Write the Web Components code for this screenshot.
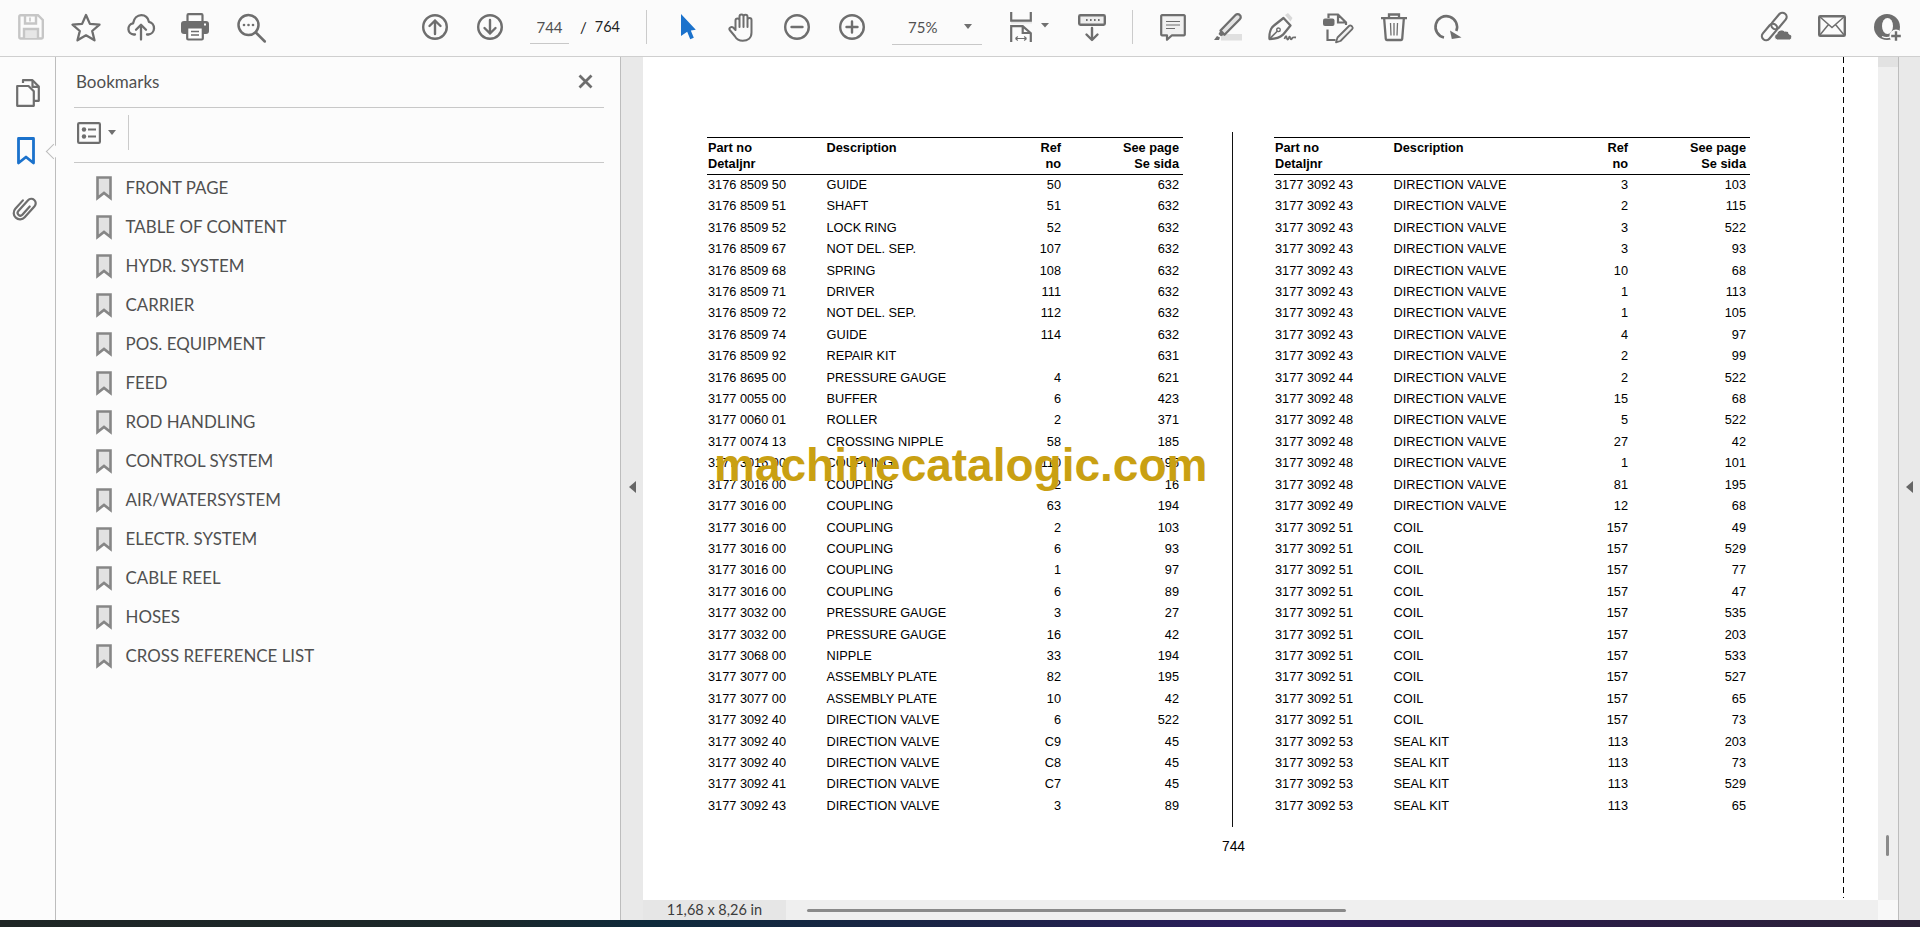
<!DOCTYPE html>
<html>
<head>
<meta charset="utf-8">
<title>Bookmarks</title>
<style>
  html, body { margin: 0; height: 927px; overflow: hidden; background: #fff; }
  body { display: flex; flex-direction: column; font-family: Lato, "Liberation Sans", sans-serif; }
</style>
</head>
<body>
<pdf-toolbar>
  <tool-icon name="save" gap="18"></tool-icon>
  <tool-icon name="star" gap="27"></tool-icon>
  <tool-icon name="upload" gap="26"></tool-icon>
  <tool-icon name="print" gap="26"></tool-icon>
  <tool-icon name="search" gap="28"></tool-icon>
  <tool-icon name="up" gap="156"></tool-icon>
  <tool-icon name="down" gap="29"></tool-icon>
  <page-counter gap="27" current="744" total="764"></page-counter>
  <tool-sep gap="26"></tool-sep>
  <tool-icon name="cursor" gap="33"></tool-icon>
  <tool-icon name="hand" gap="32"></tool-icon>
  <tool-icon name="minus" gap="28"></tool-icon>
  <tool-icon name="plus" gap="29"></tool-icon>
  <zoom-box gap="27" value="75%"></zoom-box>
  <tool-icon name="fit" gap="28"></tool-icon>
  <tool-icon name="caret" gap="9"></tool-icon>
  <tool-icon name="keys" gap="29"></tool-icon>
  <tool-sep gap="26"></tool-sep>
  <tool-icon name="comment" gap="27"></tool-icon>
  <tool-icon name="marker" gap="28"></tool-icon>
  <tool-icon name="pen" gap="26"></tool-icon>
  <tool-icon name="docedit" gap="26"></tool-icon>
  <tool-icon name="trash" gap="28"></tool-icon>
  <tool-icon name="rotate" gap="27"></tool-icon>
  <tool-icon name="link" gap="300"></tool-icon>
  <tool-icon name="mail" gap="26"></tool-icon>
  <tool-icon name="user" gap="28"></tool-icon>
</pdf-toolbar>
<pdf-main>
  <side-rail></side-rail>
  <bookmark-panel>
    <bookmark-item>FRONT PAGE</bookmark-item>
    <bookmark-item>TABLE OF CONTENT</bookmark-item>
    <bookmark-item>HYDR. SYSTEM</bookmark-item>
    <bookmark-item>CARRIER</bookmark-item>
    <bookmark-item>POS. EQUIPMENT</bookmark-item>
    <bookmark-item>FEED</bookmark-item>
    <bookmark-item>ROD HANDLING</bookmark-item>
    <bookmark-item>CONTROL SYSTEM</bookmark-item>
    <bookmark-item>AIR/WATERSYSTEM</bookmark-item>
    <bookmark-item>ELECTR. SYSTEM</bookmark-item>
    <bookmark-item>CABLE REEL</bookmark-item>
    <bookmark-item>HOSES</bookmark-item>
    <bookmark-item>CROSS REFERENCE LIST</bookmark-item>
  </bookmark-panel>
  <side-splitter dir="left"></side-splitter>
  <doc-viewer>
    <parts-table data-set="left"></parts-table>
    <parts-table data-set="right"></parts-table>
  </doc-viewer>
  <side-splitter dir="right"></side-splitter>
</pdf-main>
<task-strip></task-strip>

<script>
const G = '#6e6e6e';
// icons are drawn in real pixels; every box is 30 high and starts at y=12 of the toolbar
const ICONS = {
  save: { w: 26, top: 14, body: `<g fill="none" stroke="#c6c6c6" stroke-width="2.4"><path d="M2.5 1.2H20l4.8 4.8v17.3a1.2 1.2 0 0 1-1.2 1.2H2.5a1.2 1.2 0 0 1-1.2-1.2V2.4a1.2 1.2 0 0 1 1.2-1.2z"/><path d="M7 1.5v8h11v-8"/><path d="M12 3.5v4" stroke-width="1.6"/><path d="M6 24v-9h14v9" fill="#e6e6e6"/></g>` },
  star: { w: 30, top: 13, body: `<path d="M15 2l3.9 8.9 9.6.8-7.3 6.3 2.3 9.3-8.5-5-8.5 5 2.3-9.3-7.3-6.3 9.6-.8z" fill="none" stroke="${G}" stroke-width="2.3" stroke-linejoin="round"/>` },
  upload: { w: 28, top: 14, body: `<g fill="none" stroke="${G}" stroke-width="2.3" stroke-linecap="round" stroke-linejoin="round"><path d="M8 20.5H6.8a5.6 5.6 0 0 1-.8-11.1C7 4.4 10.3 1.2 14.3 1.2c3.8 0 6.8 2.8 7.7 6.7a6.4 6.4 0 0 1-.6 12.6H20"/><path d="M14 25.5V11M9 15.8l5-5 5 5"/></g>` },
  print: { w: 28, top: 13, body: `<g><path d="M6.5 8V2.2a1 1 0 0 1 1-1h13a1 1 0 0 1 1 1V8" fill="none" stroke="${G}" stroke-width="2.2"/><rect x="0" y="8" width="28" height="13" rx="3" fill="${G}"/><rect x="23" y="10.5" width="2" height="2" fill="#fff"/><rect x="6.2" y="14.5" width="15.6" height="12" rx="1" fill="#fff" stroke="${G}" stroke-width="2.2"/><path d="M10 18.5h8M10 22h8" stroke="${G}" stroke-width="1.4"/></g>` },
  search: { w: 29, top: 14, body: `<g fill="none" stroke="${G}" stroke-width="2.5" stroke-linecap="round"><circle cx="11.5" cy="11" r="10"/><path d="M18.8 18.5l9 9"/></g><g fill="${G}"><circle cx="7" cy="11" r="1.3"/><circle cx="11.5" cy="11" r="1.3"/><circle cx="16" cy="11" r="1.3"/></g>` },
  up: { w: 26, top: 14, body: `<g fill="none" stroke="${G}" stroke-width="2.4" stroke-linecap="round" stroke-linejoin="round"><circle cx="13" cy="13" r="11.8"/><path d="M13 20V6.5M7.5 12L13 6.5 18.5 12"/></g>` },
  down: { w: 26, top: 14, body: `<g fill="none" stroke="${G}" stroke-width="2.4" stroke-linecap="round" stroke-linejoin="round"><circle cx="13" cy="13" r="11.8"/><path d="M13 6v13.5M7.5 14L13 19.5 18.5 14"/></g>` },
  cursor: { w: 16, top: 14, body: `<path d="M1 0l14.8 15.8-5 .7 3 7.2-3.6 1.5-3-7.4L1 22z" fill="#1b72cc"/>` },
  hand: { w: 28, top: 13, body: `<path d="M7.5 17V7.5a2 2 0 0 1 4 0V14V3.5a2 2 0 0 1 4 0V14V3.7a2 2 0 0 1 4 0V14V7a2 2 0 0 1 4 0v12.5c0 5.5-3.8 8.3-8.8 8.3-4.4 0-6.4-2-8-4.8L1.7 17c-1.2-2 1.6-4 3.5-2.4z" fill="none" stroke="${G}" stroke-width="2" stroke-linejoin="round" stroke-linecap="round"/>` },
  minus: { w: 26, top: 14, body: `<g fill="none" stroke="${G}" stroke-width="2.4" stroke-linecap="round"><circle cx="13" cy="13" r="11.8"/><path d="M7.5 13h11"/></g>` },
  plus: { w: 26, top: 14, body: `<g fill="none" stroke="${G}" stroke-width="2.4" stroke-linecap="round"><circle cx="13" cy="13" r="11.8"/><path d="M7.5 13h11M13 7.5v11"/></g>` },
  fit: { w: 22, top: 12, body: `<rect x="1" y="9" width="21" height="2.5" fill="#e6e6e6"/><g fill="none" stroke="${G}" stroke-width="2.2"><path d="M1.2 0v8.600h19.600V0"/><path d="M1.2 30V14.200h11.500l8.100 7V30M12.700 14.500v6.500h7.800"/></g><path d="M5.500 26.500h11M5.500 26.500l2.300-2M5.500 26.500l2.300 2M16.500 26.500l-2.300-2M16.500 26.500l-2.300 2" fill="none" stroke="${G}" stroke-width="1.2"/>` },
  caret: { w: 8, top: 23, body: `<path d="M0 0h8L4 4.500z" fill="#707070"/>` },
  keys: { w: 28, top: 14, body: `<rect x="1.2" y="1.2" width="25.6" height="9.6" rx="1.2" fill="#eee" stroke="${G}" stroke-width="2.4"/><g fill="${G}"><rect x="8" y="5" width="1.6" height="2"/><rect x="12" y="5" width="1.6" height="2"/><rect x="16" y="5" width="1.6" height="2"/><rect x="20" y="5" width="1.6" height="2"/></g><path d="M14 14v11.5M8.500 20.500l5.500 5.500 5.500-5.500" fill="none" stroke="${G}" stroke-width="2.4" stroke-linecap="round" stroke-linejoin="round"/>` },
  comment: { w: 26, top: 14, body: `<path d="M2 1.2h22a.8.8 0 0 1 .8.8v18.5a.8.8 0 0 1-.8.8H12L7 25.800v-4.500H2a.8.8 0 0 1-.8-.8V2a.8.8 0 0 1 .8-.8z" fill="#f1f1f1" stroke="${G}" stroke-width="2.2" stroke-linejoin="round"/><path d="M6 7.500h14M6 11h14M6 14.500h9" stroke="${G}" stroke-width="1.2"/>` },
  marker: { w: 28, top: 13, body: `<rect x="7" y="21" width="21" height="6.5" fill="#e0e0e0"/><path d="M0 27l3-4 3 1.500-1 2.500z" fill="${G}"/><path d="M6.500 17.500L21.500 2a3 3 0 0 1 4.300 0 3 3 0 0 1 0 4.300L10.500 21.800z" fill="#e4e4e4" stroke="${G}" stroke-width="2.3" stroke-linejoin="round"/><path d="M6.500 17.500l-2 3.500 2.300 2.300 3.700-1.500z" fill="${G}"/>` },
  pen: { w: 29, top: 13, body: `<path d="M17 2l3-2 4.500 5-2 3.500z" fill="#d9d9d9"/><path d="M1.500 26C1 20 3 14.500 6 12.500L15.500 5l7 7.500-7.500 9.200c-3 2.800-8 4.300-13.500 4.300z" fill="none" stroke="${G}" stroke-width="2.3" stroke-linejoin="round"/><path d="M2 25.500L9.500 18" stroke="${G}" stroke-width="1.6"/><circle cx="10.500" cy="16.800" r="1.800" fill="none" stroke="${G}" stroke-width="1.4"/><path d="M16.500 26c1-3.500 1.800-3.500 2.300-1 .6 2.200 1.300 2 2-.2.500-1.800 1.200-1.500 1.500.2.400 1.800 1.200 1.500 2 0 .4-1 1.200-.8 3.700-.5" fill="none" stroke="${G}" stroke-width="1.8"/>` },
  docedit: { w: 30, top: 13, body: `<path d="M5.500 5V1.500h9.500L23 9.500v2.500M15 2v7.500h8" fill="none" stroke="${G}" stroke-width="2.2"/><rect x="0" y="5.5" width="11.5" height="7.5" rx="2" fill="${G}"/><path d="M4.500 16.500v10.500h8" fill="none" stroke="${G}" stroke-width="2.2"/><path d="M14.500 24.500L26 13a1.800 1.800 0 0 1 2.500 0l.7.700a1.800 1.800 0 0 1 0 2.500L17.500 28l-4.500 1.300z" fill="#f1f1f1" stroke="${G}" stroke-width="1.8" stroke-linejoin="round"/>` },
  trash: { w: 26, top: 13, body: `<g fill="none" stroke="${G}"><path d="M0 5.200h26M8 5V1.500h10V5" stroke-width="2.3"/><path d="M3.200 6l1.600 20a1 1 0 0 0 1 1h14.400a1 1 0 0 0 1-1l1.600-20" stroke-width="2.3"/><path d="M9.500 10l.5 12.500M13 10v12.500M16.500 10L16 22.500" stroke-width="1.3"/></g>` },
  rotate: { w: 28, top: 15, body: `<path d="M10 22.500A10.800 10.800 0 1 1 22.300 16" fill="none" stroke="${G}" stroke-width="2.6"/><path d="M16 15.500L27.500 22.500 17.800 24z" fill="${G}"/>` },
  link: { w: 30, top: 13, body: `<g fill="none" stroke="${G}" stroke-width="2.2"><rect x="-9.500" y="-4.200" width="19" height="8.400" rx="4.200" transform="translate(7.500 19) rotate(-50)"/><rect x="-9.500" y="-4.200" width="19" height="8.400" rx="4.200" transform="translate(17 8) rotate(-50)"/></g><path d="M15.500 27a3.200 3.200 0 0 1-.5-6.300c.5-3.500 5-5 7.500-2.500 2-.7 4.300.5 4.500 2.700a3.100 3.100 0 0 1 .5 6.100z" fill="${G}" stroke="#fbfbfb" stroke-width="1"/>` },
  mail: { w: 28, top: 15, body: `<g fill="none" stroke="${G}"><rect x="1.2" y="1.2" width="25.6" height="19.6" rx="1" stroke-width="2.4"/><path d="M1.500 1.500L14 12.500 26.500 1.500M1.500 20.500L10.500 9.500M26.500 20.500L17.500 9.500" stroke-width="1.5"/></g>` },
  user: { w: 27, top: 14, body: `<circle cx="13" cy="13" r="13" fill="${G}"/><ellipse cx="13.500" cy="12" rx="5.500" ry="8" fill="#fbfbfb"/><path d="M8 22.500c3 1.500 6 1.500 9 0" fill="none" stroke="#fbfbfb" stroke-width="1.2"/><circle cx="22" cy="22" r="6.500" fill="#fbfbfb"/><path d="M22 17.200v9.600M17.200 22h9.600" stroke="${G}" stroke-width="2.4"/>` },
  pages: { w: 24, top: 0, h: 28, body: `<g fill="none" stroke="${G}" stroke-width="2.2" stroke-linejoin="round"><path d="M7 4V1.200h9.500l6.300 6.300v14.300H18"/><path d="M16.500 1.500v6.300h6"/><path d="M1.200 7H7v0H12.500l5.300 5.300V26.800H1.200z"/></g>` },
  bookmark: { w: 18, top: 0, h: 28, body: `<path d="M1.500 1.500h15v24.500L9 20l-7.500 6z" fill="none" stroke="#1b72cc" stroke-width="2.8" stroke-linejoin="round"/>` },
  clip: { w: 25, top: 0, h: 26, body: `<path d="M3.200-3.500V7.500a2.700 2.700 0 0 1-5.400 0V-7a4.400 4.400 0 0 1 8.800 0V7.800a6.300 6.300 0 0 1-12.600 0V-3.500" fill="none" stroke="${G}" stroke-width="2.2" stroke-linecap="round" transform="translate(12 13) rotate(42)"/>` },
  options: { w: 24, top: 0, h: 22, body: `<rect x="1.1" y="1.1" width="21.8" height="19.8" rx="1.2" fill="none" stroke="${G}" stroke-width="2.2"/><g fill="${G}"><circle cx="7" cy="7.500" r="2.200"/><circle cx="7" cy="14.500" r="2.200"/><rect x="11" y="6.500" width="8" height="2"/><rect x="11" y="13.500" width="8" height="2"/></g>` },
  close: { w: 15, top: 0, h: 15, body: `<path d="M1.500 1.500l12 12M13.500 1.500l-12 12" stroke="${G}" stroke-width="2.8"/>` },
  mark: { w: 16, top: 0, h: 24, body: `<path d="M1.500 1.500h13V22l-6.500-5-6.500 5z" fill="#e2e2e2" stroke="#868686" stroke-width="2.6"/>` }
};

class ToolIcon extends HTMLElement {
  connectedCallback() {
    const ic = ICONS[this.getAttribute('name')];
    const h = ic.h || 30;
    const dy = ic.h ? 0 : ic.top - 12;
    const gap = this.getAttribute('gap') || 0;
    this.attachShadow({ mode: 'open' }).innerHTML = `
      <style>
        :host { display: block; flex: none; margin-left: ${gap}px; height: ${h}px; }
        svg { display: block; overflow: visible; }
      </style>
      <svg width="${ic.w}" height="${h}" viewBox="0 ${-dy} ${ic.w} ${h}">${ic.body}</svg>`;
  }
}
customElements.define('tool-icon', ToolIcon);

class PdfToolbar extends HTMLElement {
  connectedCallback() {
    this.attachShadow({ mode: 'open' }).innerHTML = `
      <style>
        :host {
          display: flex; flex: none; align-items: flex-start; box-sizing: border-box;
          height: 57px; padding-top: 12px; background: #fbfbfb; border-bottom: 1px solid #cfcfcf;
        }
      </style>
      <slot></slot>`;
  }
}
customElements.define('pdf-toolbar', PdfToolbar);

class ToolSep extends HTMLElement {
  connectedCallback() {
    this.attachShadow({ mode: 'open' }).innerHTML = `
      <style>
        :host { display: block; flex: none; width: 1px; height: 34px; margin: -2px 0 0 ${this.getAttribute('gap')}px; background: #cbcbcb; }
      </style>`;
  }
}
customElements.define('tool-sep', ToolSep);

class PageCounter extends HTMLElement {
  connectedCallback() {
    this.attachShadow({ mode: 'open' }).innerHTML = `
      <style>
        :host { display: flex; flex: none; width: 90px; margin-left: ${this.getAttribute('gap')}px; font-size: 15px; color: #222; height: 32px; }
        .box { width: 45px; height: 32px; box-sizing: border-box; border-bottom: 1px solid #c8c8c8; text-align: center; line-height: 30px; color: #505050; }
        .sl { margin-left: 11px; line-height: 30px; }
        .tot { margin-left: 8px; line-height: 30px; font-size: 14.5px; }
      </style>
      <div class="box">${this.getAttribute('current')}</div>
      <div class="sl">/</div>
      <div class="tot">${this.getAttribute('total')}</div>`;
  }
}
customElements.define('page-counter', PageCounter);

class ZoomBox extends HTMLElement {
  connectedCallback() {
    this.attachShadow({ mode: 'open' }).innerHTML = `
      <style>
        :host {
          display: flex; flex: none; align-items: center; box-sizing: border-box; width: 90px; height: 33px;
          margin-left: ${this.getAttribute('gap')}px; padding: 0 10px 3px 16px; border-bottom: 1px solid #c8c8c8;
          font-size: 15px; color: #505050; justify-content: space-between;
        }
        i { width: 0; height: 0; border: 4px solid transparent; border-top: 5px solid #707070; border-bottom: 0; }
      </style>
      <span>${this.getAttribute('value')}</span><i></i>`;
  }
}
customElements.define('zoom-box', ZoomBox);

class PdfMain extends HTMLElement {
  connectedCallback() {
    this.attachShadow({ mode: 'open' }).innerHTML = `
      <style>
        :host { display: flex; flex: 1; min-height: 0; }
      </style>
      <slot></slot>`;
  }
}
customElements.define('pdf-main', PdfMain);

class SideRail extends HTMLElement {
  connectedCallback() {
    this.attachShadow({ mode: 'open' }).innerHTML = `
      <style>
        :host {
          display: flex; flex: none; flex-direction: column; position: relative; box-sizing: border-box;
          width: 56px; padding: 22px 0 0 16px; background: #fcfcfc; border-right: 1px solid #bdbdbd;
        }
        .bm { margin: 30px 0 0 1px; }
        .cl { margin: 29px 0 0 -3px; }
        .notch {
          position: absolute; left: 48px; top: 89px; width: 11px; height: 11px; box-sizing: border-box;
          background: #fcfcfc; border-left: 1px solid #bdbdbd; border-bottom: 1px solid #bdbdbd; transform: rotate(45deg);
        }
      </style>
      <tool-icon name="pages"></tool-icon>
      <tool-icon class="bm" name="bookmark"></tool-icon>
      <tool-icon class="cl" name="clip"></tool-icon>
      <div class="notch"></div>`;
  }
}
customElements.define('side-rail', SideRail);

class BookmarkPanel extends HTMLElement {
  connectedCallback() {
    this.attachShadow({ mode: 'open' }).innerHTML = `
      <style>
        :host { display: block; flex: none; box-sizing: border-box; width: 564px; padding: 0 16px 0 18px; background: #fcfcfc; }
        .head {
          display: flex; align-items: center; justify-content: space-between; height: 51px; box-sizing: border-box;
          padding: 0 11px 2px 2px; border-bottom: 1px solid #c8c8c8; font-size: 17px; color: #505050;
        }
        .tools { display: flex; height: 55px; box-sizing: border-box; border-bottom: 1px solid #c8c8c8; align-items: center; padding: 0 0 5px 3px; }
        .cap { width: 0; height: 0; border: 4px solid transparent; border-top: 5px solid #707070; border-bottom: 0; margin: 0 0 0 7px; }
        .rule { width: 1px; height: 35px; background: #cbcbcb; margin-left: 12px; }
        .list { display: flex; flex-direction: column; padding: 5px 0 0 22px; }
      </style>
      <div class="head"><span>Bookmarks</span><tool-icon name="close"></tool-icon></div>
      <div class="tools"><tool-icon name="options"></tool-icon><div class="cap"></div><div class="rule"></div></div>
      <div class="list"><slot></slot></div>`;
  }
}
customElements.define('bookmark-panel', BookmarkPanel);

class BookmarkItem extends HTMLElement {
  connectedCallback() {
    this.attachShadow({ mode: 'open' }).innerHTML = `
      <style>
        :host { display: flex; align-items: center; height: 39px; font-size: 16.9px; color: #505050; }
        span { margin-left: 13.5px; }
      </style>
      <tool-icon name="mark"></tool-icon><span><slot></slot></span>`;
  }
}
customElements.define('bookmark-item', BookmarkItem);

class SideSplitter extends HTMLElement {
  connectedCallback() {
    const left = this.getAttribute('dir') === 'left';
    this.attachShadow({ mode: 'open' }).innerHTML = `
      <style>
        :host {
          display: flex; flex: none; align-items: center; justify-content: center; box-sizing: border-box;
          width: ${left ? 23 : 21}px; background: #e9e9e9; padding-bottom: 3px;
          ${left ? 'border-left: 1px solid #bdbdbd;' : ''}
        }
        i { width: 0; height: 0; border: 6px solid transparent; border-left: 0; border-right: 7px solid #666; }
      </style>
      <i></i>`;
  }
}
customElements.define('side-splitter', SideSplitter);

class DocViewer extends HTMLElement {
  connectedCallback() {
    this.attachShadow({ mode: 'open' }).innerHTML = `
      <style>
        :host { display: grid; flex: 1; min-width: 0; grid-template-columns: 1fr 20px 1px; grid-template-rows: 1fr 20px; }
        .sheet { position: relative; display: flex; overflow: hidden; background: #fff; padding: 0; }
        .page { display: flex; flex-direction: column; width: 1200px; padding-left: 64px; box-sizing: border-box; }
        .cols { display: flex; align-items: flex-start; margin-top: 75px; }
        .cols ::slotted(parts-table) { margin-top: 5px; }
        .divider { flex: none; width: 1px; height: 695px; background: #111; margin: 0 41px 0 49px; }
        .folio { width: 1053px; text-align: center; font: 13.8px "Liberation Sans", sans-serif; color: #000; margin-top: 12px; }
        .dash {
          flex: none; width: 1px; height: 841px;
          background: repeating-linear-gradient(to bottom, #000 0 6px, transparent 6px 10px);
        }
        .brand {
          position: absolute; left: 71px; top: 381px; font: bold 46px "Liberation Sans", sans-serif; color: #c9a012; white-space: nowrap;
        }
        .vbar { display: flex; flex-direction: column; background: #efefef; }
        .vbar .btn { height: 10px; background: #e2e2e2; }
        .vbar .thumb { width: 3px; height: 21px; margin: 768px 0 0 8px; border-radius: 2px; background: #8a8a8a; }
        .edge { grid-row: 1 / 3; grid-column: 3; background: #bdbdbd; }
        .status { display: flex; align-items: center; background: #efefef; }
        .size { width: 143px; height: 20px; line-height: 19px; text-align: center; background: #e6e6e6; font-size: 14.5px; color: #3c3c3c; }
        .hthumb { width: 539px; height: 3px; margin-left: 21px; border-radius: 2px; background: #8a8a8a; }
        .corner { background: #f8f8f8; }
      </style>
      <div class="sheet">
        <div class="page">
          <div class="cols">
            <slot name="l"></slot>
            <div class="divider"></div>
            <slot name="r"></slot>
          </div>
          <div class="folio">744</div>
        </div>
        <div class="dash"></div>
        <div class="brand">machinecatalogic.com</div>
      </div>
      <div class="vbar"><div class="btn"></div><div class="thumb"></div></div>
      <div class="edge"></div>
      <div class="status"><div class="size">11,68 x 8,26 in</div><div class="hthumb"></div></div>
      <div class="corner"></div>`;
    const tables = this.querySelectorAll('parts-table');
    tables[0].slot = 'l';
    tables[1].slot = 'r';
  }
}
customElements.define('doc-viewer', DocViewer);

const DV = 'DIRECTION VALVE';
const PARTS = {
  left: [
    ['3176 8509 50', 'GUIDE', '50', '632'], ['3176 8509 51', 'SHAFT', '51', '632'], ['3176 8509 52', 'LOCK RING', '52', '632'],
    ['3176 8509 67', 'NOT DEL. SEP.', '107', '632'], ['3176 8509 68', 'SPRING', '108', '632'], ['3176 8509 71', 'DRIVER', '111', '632'],
    ['3176 8509 72', 'NOT DEL. SEP.', '112', '632'], ['3176 8509 74', 'GUIDE', '114', '632'], ['3176 8509 92', 'REPAIR KIT', '', '631'],
    ['3176 8695 00', 'PRESSURE GAUGE', '4', '621'], ['3177 0055 00', 'BUFFER', '6', '423'], ['3177 0060 01', 'ROLLER', '2', '371'],
    ['3177 0074 13', 'CROSSING NIPPLE', '58', '185'], ['3177 3016 00', 'COUPLING', '110', '195'], ['3177 3016 00', 'COUPLING', '2', '16'],
    ['3177 3016 00', 'COUPLING', '63', '194'], ['3177 3016 00', 'COUPLING', '2', '103'], ['3177 3016 00', 'COUPLING', '6', '93'],
    ['3177 3016 00', 'COUPLING', '1', '97'], ['3177 3016 00', 'COUPLING', '6', '89'], ['3177 3032 00', 'PRESSURE GAUGE', '3', '27'],
    ['3177 3032 00', 'PRESSURE GAUGE', '16', '42'], ['3177 3068 00', 'NIPPLE', '33', '194'], ['3177 3077 00', 'ASSEMBLY PLATE', '82', '195'],
    ['3177 3077 00', 'ASSEMBLY PLATE', '10', '42'], ['3177 3092 40', DV, '6', '522'], ['3177 3092 40', DV, 'C9', '45'],
    ['3177 3092 40', DV, 'C8', '45'], ['3177 3092 41', DV, 'C7', '45'], ['3177 3092 43', DV, '3', '89']
  ],
  right: [
    ['3177 3092 43', DV, '3', '103'], ['3177 3092 43', DV, '2', '115'], ['3177 3092 43', DV, '3', '522'],
    ['3177 3092 43', DV, '3', '93'], ['3177 3092 43', DV, '10', '68'], ['3177 3092 43', DV, '1', '113'],
    ['3177 3092 43', DV, '1', '105'], ['3177 3092 43', DV, '4', '97'], ['3177 3092 43', DV, '2', '99'],
    ['3177 3092 44', DV, '2', '522'], ['3177 3092 48', DV, '15', '68'], ['3177 3092 48', DV, '5', '522'],
    ['3177 3092 48', DV, '27', '42'], ['3177 3092 48', DV, '1', '101'], ['3177 3092 48', DV, '81', '195'],
    ['3177 3092 49', DV, '12', '68'], ['3177 3092 51', 'COIL', '157', '49'], ['3177 3092 51', 'COIL', '157', '529'],
    ['3177 3092 51', 'COIL', '157', '77'], ['3177 3092 51', 'COIL', '157', '47'], ['3177 3092 51', 'COIL', '157', '535'],
    ['3177 3092 51', 'COIL', '157', '203'], ['3177 3092 51', 'COIL', '157', '533'], ['3177 3092 51', 'COIL', '157', '527'],
    ['3177 3092 51', 'COIL', '157', '65'], ['3177 3092 51', 'COIL', '157', '73'], ['3177 3092 53', 'SEAL KIT', '113', '203'],
    ['3177 3092 53', 'SEAL KIT', '113', '73'], ['3177 3092 53', 'SEAL KIT', '113', '529'], ['3177 3092 53', 'SEAL KIT', '113', '65']
  ]
};

class PartsTable extends HTMLElement {
  connectedCallback() {
    const rows = PARTS[this.dataset.set].map(r =>
      `<div class="row"><span>${r[0]}</span><span>${r[1]}</span><span class="r">${r[2]}</span><span class="r">${r[3]}</span></div>`
    ).join('');
    this.attachShadow({ mode: 'open' }).innerHTML = `
      <style>
        :host { display: block; flex: none; width: 476px; font: 12.75px "Liberation Sans", sans-serif; color: #000; }
        .row, .head {
          display: grid; grid-template-columns: 118.5px 170px 64.5px 118px; padding: 0 4px 0 1px; box-sizing: border-box;
        }
        .row { height: 21.42px; line-height: 21.42px; white-space: nowrap; }
        .r { text-align: right; }
        .head {
          font-weight: bold; line-height: 16px; padding-top: 2px; padding-bottom: 2px;
          border-top: 1.5px solid #000; border-bottom: 1.5px solid #000; margin-bottom: -1px;
        }
      </style>
      <div class="head">
        <span>Part no<br>Detaljnr</span><span>Description</span><span class="r">Ref<br>no</span><span class="r">See page<br>Se sida</span>
      </div>
      ${rows}`;
  }
}
customElements.define('parts-table', PartsTable);

class TaskStrip extends HTMLElement {
  connectedCallback() {
    this.attachShadow({ mode: 'open' }).innerHTML = `
      <style>
        :host {
          display: block; flex: none; height: 7px;
          background: linear-gradient(to right, #1f2625 0, #1b2729 25%, #0e2a3c 34%, #1d2348 52%, #2c1c5e 66%, #2a1c48 80%, #2b2036 100%);
        }
      </style>`;
  }
}
customElements.define('task-strip', TaskStrip);
</script>
</body>
</html>
